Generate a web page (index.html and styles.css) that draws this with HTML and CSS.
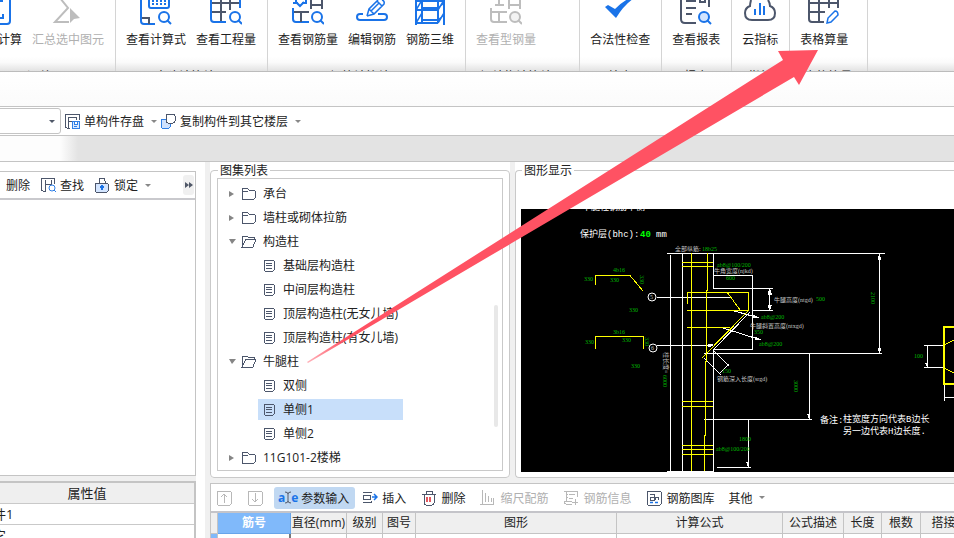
FILE: index.html
```html
<!DOCTYPE html>
<html lang="zh-CN">
<head>
<meta charset="utf-8">
<title>表格算量</title>
<link rel="stylesheet" href="styles.css">
</head>
<body>
<header class="ribbon">
  <section class="group group-first">
    <div class="tools">
      <button class="tool"><svg class="big" viewBox="0 0 32 26"><path class="b" d="M5 0V21q0 3 3 3H25q3 0 3-3V0"/><path class="b" d="M13 18H21V14M21 1H14"/></svg><span>汇总计算</span></button>
      <button class="tool muted"><svg class="big" viewBox="0 0 32 26"><path class="g" d="M8 -2L16 8L3 22H17"/><path class="gf" d="M18 8V23L22 19L28 18Z"/></svg><span>汇总选中图元</span></button>
    </div>
    <div class="caption">汇总</div>
  </section>
  <section class="group">
    <div class="tools">
      <button class="tool"><svg class="big" viewBox="0 0 32 26"><path class="b" d="M1 0V21q0 3 3 3H15M9 0V6q0 2 2 2H27q2 0 2-2V0"/><path class="d" d="M2 18H9V24"/><path class="b dots" d="M12 1H27M12 4H27"/><circle class="b" cx="24" cy="17" r="5"/><path class="b" d="M27 20l4 4"/></svg><span>查看计算式</span></button>
      <button class="tool"><svg class="big" viewBox="0 0 32 26"><path class="d" d="M2 3H29M2 12H16M11 0V22M20 0V10"/><path class="b" d="M1 0V19q0 3 3 3H16M30 0V8"/><circle class="b" cx="25" cy="17" r="5"/><path class="b" d="M28 20l4 4"/></svg><span>查看工程量</span></button>
    </div>
    <div class="caption">土建计算结果</div>
  </section>
  <section class="group">
    <div class="tools">
      <button class="tool"><svg class="big" viewBox="0 0 32 26"><path class="b" d="M1 3H6M10 3H14V0M4 0V2L8 6L12 2M1 8V19q0 3 3 3H17"/><path class="d" d="M2 12H17M9 12V22M19 0V9M30 0V9M19 5H30"/><circle class="b" cx="25" cy="17" r="5"/><path class="b" d="M28 20l4 4"/></svg><span>查看钢筋量</span></button>
      <button class="tool"><svg class="big" viewBox="0 0 32 26"><path class="b" d="M7 14H4q-3 0-3 3t3 3H28q3 0 3-3t-3-3H22"/><path class="b thin" d="M11 16L13 9L22 0M11 16L18 14L28 4Q29 1 26 0M13 9L18 14M21 1L26 6M15 11L23 3"/></svg><span>编辑钢筋</span></button>
      <button class="tool"><svg class="big" viewBox="0 0 32 26"><path class="b" d="M2 0V25M8 0V23M24 0V23M30 0V25M2 10H24M8 8H24M2 23H24M8 20H24M2 1H30"/><path class="b thin" d="M2 23L8 13M2 10L8 0M24 23L30 13M24 10L30 0M24 20L30 15M24 8L30 3"/></svg><span>钢筋三维</span></button>
    </div>
    <div class="caption">钢筋计算结果</div>
  </section>
  <section class="group">
    <div class="tools">
      <button class="tool muted"><svg class="big" viewBox="0 0 32 26"><path class="g" d="M5 5H14M9 0V5M1 8V19q0 3 3 3H17M2 12H17M9 12V22M19 0V9M30 0V9M19 5H30"/><circle class="g tint" cx="25" cy="17" r="5"/><path class="g" d="M28 20l4 4"/></svg><span>查看型钢量</span></button>
    </div>
    <div class="caption">钢结构计算结果</div>
  </section>
  <section class="group">
    <div class="tools">
      <button class="tool"><svg class="big" viewBox="0 0 32 26"><path fill="#1a73e8" d="M1 7L4 5L11 9Q18 2 24-1H29Q20 5 12 18Z"/></svg><span>合法性检查</span></button>
    </div>
    <div class="caption">检查</div>
  </section>
  <section class="group">
    <div class="tools">
      <button class="tool"><svg class="big" viewBox="0 0 32 26"><path class="d" d="M1 0V19q0 4 4 4H16M6 1H16M6 8H16M6 14H12M20 0V2H25V0M29 0V7"/><circle class="b blue-tint" cx="24" cy="17" r="5"/><path class="b" d="M27 20l4 4"/></svg><span>查看报表</span></button>
    </div>
    <div class="caption">报表</div>
  </section>
  <section class="group">
    <div class="tools">
      <button class="tool"><svg class="big" viewBox="0 0 32 26"><path class="d" d="M7 0Q6 4 6 6Q1 8 1 13Q1 20 8 20H24Q31 20 31 13Q31 8 26 6Q26 3 24 0"/><path class="b" d="M11 9V15M16 3V15M20 6V15"/></svg><span>云指标</span></button>
    </div>
    <div class="caption">指标</div>
  </section>
  <section class="group">
    <div class="tools">
      <button class="tool"><svg class="big" viewBox="0 0 32 26"><path class="d" d="M1 0V19q0 3 3 3H16M30 0V8M1 3H30M1 12H17M11 0V22M21 0V8"/><path class="b thin" fill="#fff" d="M19 23L20 18L27 11Q30 11 30 15L23 22Z"/></svg><span>表格算量</span></button>
    </div>
    <div class="caption">表格算量</div>
  </section>
</header>
<div class="titlebar"></div>
<nav class="toolbar">
  <div class="picker"><select aria-label="构件"><option></option></select></div>
  <button class="cmd"><svg class="small" viewBox="0 0 16 16"><path class="s" d="M6 15H3Q1 15 1 13V3Q1 1 3 1H15V7M4 15V4M4 4H12V7M4 8H8"/><path class="sb" fill="#dbeaff" d="M8 8H15V15H8ZM10 8V11H13V8M10 13H13"/></svg><span>单构件存盘</span><i class="caret"></i></button>
  <button class="cmd"><svg class="small" viewBox="0 0 16 16"><rect class="sb" fill="#cfe2ff" x="1" y="6" width="9" height="9" rx="1"/><rect class="s paper" x="6" y="1" width="9" height="9" rx="2"/></svg><span>复制构件到其它楼层</span><i class="caret"></i></button>
</nav>
<div class="band"></div>
<div class="workspace">
  <aside class="side">
    <section class="components">
      <div class="side-tools">
        <button class="cmd"><span>删除</span></button>
        <button class="cmd"><svg class="small" viewBox="0 0 16 16"><path class="s" d="M6 14H3Q1 14 1 12V3Q1 1 3 1H14V7M5 14V3M5 7H11V3"/><circle class="sb" cx="12" cy="11" r="3"/><path class="sb" d="M14 13l2 2"/></svg><span>查找</span></button>
        <button class="cmd"><svg class="small" viewBox="0 0 16 16"><path class="s" d="M5 6V4Q5 1 8 1T11 4V6"/><rect class="s blue-tint" x="1" y="6" width="13" height="9" rx="1"/><path d="M8 8V13M6 10H10" stroke="#1a73e8" stroke-width="2"/></svg><span>锁定</span><i class="caret"></i></button>
        <button class="more" aria-label="更多"><svg viewBox="0 0 8 6"><path d="M0 0L4 3L0 6ZM4 0L8 3L4 6Z" fill="#505868"/></svg></button>
      </div>
    </section>
    <table class="props">
      <thead><tr><th>属性值</th></tr></thead>
      <tbody><tr><td>构件1</td></tr><tr><td>其它</td></tr></tbody>
    </table>
  </aside>
  <main class="main">
    <div class="top">
      <fieldset class="box atlas">
        <legend>图集列表</legend>
        <ul class="tree">
          <li class="node"><i class="fold"></i><svg class="folder" viewBox="0 0 16 14"><path class="s" d="M1 12V2Q1 1 2 1H6L8 3H13Q14 3 14 4V11Q14 12 13 12H1M1 4H7"/></svg><span>承台</span></li>
          <li class="node"><i class="fold"></i><svg class="folder" viewBox="0 0 16 14"><path class="s" d="M1 12V2Q1 1 2 1H6L8 3H13Q14 3 14 4V11Q14 12 13 12H1M1 4H7"/></svg><span>墙柱或砌体拉筋</span></li>
          <li class="node"><i class="fold open"></i><svg class="folder" viewBox="0 0 16 14"><path class="s" d="M1 12V1H6L7 2H13V4M1 12L5 4H15L12 12Z"/></svg><span>构造柱</span></li>
          <li class="node leaf"><svg class="doc" viewBox="0 0 12 13"><path class="s" d="M2 1H10Q11 1 11 2V11Q11 12 10 12H2Q1 12 1 11V2Q1 1 2 1M3 4H9M3 6H9M3 9H9"/></svg><span>基础层构造柱</span></li>
          <li class="node leaf"><svg class="doc" viewBox="0 0 12 13"><path class="s" d="M2 1H10Q11 1 11 2V11Q11 12 10 12H2Q1 12 1 11V2Q1 1 2 1M3 4H9M3 6H9M3 9H9"/></svg><span>中间层构造柱</span></li>
          <li class="node leaf"><svg class="doc" viewBox="0 0 12 13"><path class="s" d="M2 1H10Q11 1 11 2V11Q11 12 10 12H2Q1 12 1 11V2Q1 1 2 1M3 4H9M3 6H9M3 9H9"/></svg><span>顶层构造柱(无女儿墙)</span></li>
          <li class="node leaf"><svg class="doc" viewBox="0 0 12 13"><path class="s" d="M2 1H10Q11 1 11 2V11Q11 12 10 12H2Q1 12 1 11V2Q1 1 2 1M3 4H9M3 6H9M3 9H9"/></svg><span>顶层构造柱(有女儿墙)</span></li>
          <li class="node"><i class="fold open"></i><svg class="folder" viewBox="0 0 16 14"><path class="s" d="M1 12V1H6L7 2H13V4M1 12L5 4H15L12 12Z"/></svg><span>牛腿柱</span></li>
          <li class="node leaf"><svg class="doc" viewBox="0 0 12 13"><path class="s" d="M2 1H10Q11 1 11 2V11Q11 12 10 12H2Q1 12 1 11V2Q1 1 2 1M3 4H9M3 6H9M3 9H9"/></svg><span>双侧</span></li>
          <li class="node leaf selected"><svg class="doc" viewBox="0 0 12 13"><path class="s" d="M2 1H10Q11 1 11 2V11Q11 12 10 12H2Q1 12 1 11V2Q1 1 2 1M3 4H9M3 6H9M3 9H9"/></svg><span>单侧1</span></li>
          <li class="node leaf"><svg class="doc" viewBox="0 0 12 13"><path class="s" d="M2 1H10Q11 1 11 2V11Q11 12 10 12H2Q1 12 1 11V2Q1 1 2 1M3 4H9M3 6H9M3 9H9"/></svg><span>单侧2</span></li>
          <li class="node"><i class="fold"></i><svg class="folder" viewBox="0 0 16 14"><path class="s" d="M1 12V2Q1 1 2 1H6L8 3H13Q14 3 14 4V11Q14 12 13 12H1M1 4H7"/></svg><span>11G101-2楼梯</span></li>
        </ul>
      </fieldset>
      <fieldset class="box figure">
        <legend>图形显示</legend>
        <svg class="cad" viewBox="521 209 433 263" preserveAspectRatio="xMinYMin slice">
          <rect x="521" y="209" width="2000" height="263" fill="#000"/>
          <g class="w">
            <path d="M667 253.500H885M670.500 255V471M682.500 253V471M713.500 253V288M713.500 349V471M667 471.500H714M713 275.500H753M752.500 276V349M713 288.500H773M769.500 289V310M752 310.500H773M657 297.500H730M657 345.500H713M713 349.500H753M704 353.500H882M879.500 254V353M809.500 353V419M704 419.500H812M748.500 420V467M717 467.500H751M750 312L713 350L729 366M704 358L721 375M720 373L729 364M731 310L759 318M723 328L761 340M924 345.500H944M924 367.500H944M927.500 346V367M944.500 385V401M944 397.500H954"/>
            <path d="M769.500 289l-1 5h3zM769.500 310l-1-5h3zM879.500 254l-1 5h2zM879.500 353l-1-5h2zM809.500 419l-2-5h2zM748.500 467l-2-5h2zM927.500 367l-2-4h2zM713 345l-5-1v3zM761 340l-6-3v2zM759 318l-6-3v2z" fill="#fff"/>
            <circle cx="652" cy="297" r="4"/><circle cx="653" cy="348" r="4"/>
          </g>
          <g class="y">
            <path d="M691.500 253V471M707.500 253V290L706.500 291V361L705.500 362V435L704.500 436V471M682 262.500H713M682 266.500H713M687.500 304V292.500H748.500V310.500H687M687 327.500H730M748 311L702 358M727 292L740 310M682 401.500H713M682 406.500H713M682 445.500H713M682 449.500H713M682 454.500H713M595.500 285V275.500H630L643 291M595.500 349V336.500H643.500V349M944 345L954 340M944 368L954 373"/>
            <path class="heavy" d="M955 327H944V384H955"/>
          </g>
          <g class="label title">
            <text x="582" y="210">牛腿柱钢筋单侧</text>
            <text x="580" y="237">保护层(bhc):</text><text x="656" y="237">mm</text>
            <text x="820" y="423">备注:</text><text x="843" y="422">柱宽度方向代表B边长</text><text x="843" y="434">另一边代表H边长度.</text>
          </g>
          <text class="cover" x="640" y="237">40</text>
          <g class="label tiny">
            <text x="675" y="251">全部纵筋:</text><text x="714" y="273">牛角宽度(njkd)</text><text x="774" y="302">牛腿高度(ntgd)</text><text x="750" y="328">牛腿斜置高度(ntxgd)</text><text x="717" y="381">钢筋深入长度(srgd)</text>
            <text x="650" y="299">5</text><text x="651" y="350">6</text><text transform="translate(664 352) rotate(90)">柱长度=</text>
          </g>
          <g class="value">
            <text x="702" y="251">18b25</text><text x="717" y="267">ab8@100/200</text><text x="726" y="280">600</text><text x="816" y="301">500</text>
            <text x="761" y="319">ab8@200</text><text x="754" y="334">350</text><text x="759" y="346">ab8@200</text><text x="722" y="373">150</text>
            <text x="613" y="272">4b16</text><text x="584" y="281">330</text><text x="610" y="282">330</text><text x="629" y="312">330</text><text x="613" y="334">3b16</text><text x="585" y="344">330</text><text x="622" y="342">330</text><text x="631" y="368">330</text>
            <text x="739" y="441">1800</text><text x="716" y="451">ab8@100/200</text><text x="914" y="358">100</text>
            <text transform="translate(640 275) rotate(90)">330</text><text transform="translate(645 337) rotate(90)">330</text><text transform="translate(663 375) rotate(90)">6000</text><text transform="translate(794 380) rotate(90)">3000</text><text transform="translate(871 292) rotate(90)">2100</text>
          </g>
        </svg>
      </fieldset>
    </div>
    <section class="rebar">
      <div class="rebar-tools">
        <button class="cmd" aria-label="上移"><svg class="small" viewBox="0 0 16 16"><path class="m" d="M2 1H14Q15 1 15 2V14Q15 15 14 15H2Q1 15 1 14V2Q1 1 2 1M8 13V4M5 7L8 4L11 7"/></svg></button>
        <button class="cmd" aria-label="下移"><svg class="small" viewBox="0 0 16 16"><path class="m" d="M2 1H14Q15 1 15 2V14Q15 15 14 15H2Q1 15 1 14V2Q1 1 2 1M8 3V12M5 9L8 12L11 9"/></svg></button>
        <button class="cmd active"><b class="ae">a<svg viewBox="0 0 6 13"><path d="M0 1Q3 1 3 3Q3 1 6 1M3 3V10M0 12Q3 12 3 10Q3 12 6 12" fill="none" stroke="#505868"/></svg>e</b><span>参数输入</span></button>
        <button class="cmd"><svg class="small" viewBox="0 0 16 16"><path class="s" d="M9 3V2H1M1 12H9V11M1 5H8V9H1Z"/><path d="M10 7H15M12 4L15 7L12 10" stroke="#1a73e8" stroke-width="1.500" fill="none"/></svg><span>插入</span></button>
        <button class="cmd"><svg class="small" viewBox="0 0 16 16"><path class="s" d="M1 4H15M5 4V1H11V4M3 4V13Q3 15 5 15H11Q13 15 13 13V4"/><path d="M6 7V12M9 7V12" stroke="#d9232e" stroke-width="1.500"/></svg><span>删除</span></button>
        <button class="cmd muted"><svg class="small" viewBox="0 0 16 16"><path class="m" d="M2 0V15M5 3V12M8 6V12M11 8V12M13 8V12M0 14H14M13 12V15"/></svg><span>缩尺配筋</span></button>
        <button class="cmd muted"><svg class="small" viewBox="0 0 16 16"><path class="m" d="M9 14H3Q1 14 1 12V11H9M3 11V1H14V7M1 1H13M6 4H12M6 8H10M12 9V15M9 12H15M4 4V5M4 7V8"/></svg><span>钢筋信息</span></button>
        <button class="cmd"><svg class="small" viewBox="0 0 16 16"><path class="s" d="M2 1H14Q15 1 15 2V14Q15 15 14 15H2Q1 15 1 14V2Q1 1 2 1M4 4H8V10H4V7H8M9 10V7H12V10"/><path d="M4 12.500H7M9 12.500H12" stroke="#1a73e8" stroke-width="1.500"/></svg><span>钢筋图库</span></button>
        <button class="cmd other"><span>其他</span><i class="caret"></i></button>
      </div>
      <table class="grid">
        <colgroup><col class="c-mark"><col class="c-no"><col class="c-dia"><col class="c-grade"><col class="c-fig"><col class="c-shape"><col class="c-formula"><col class="c-desc"><col class="c-len"><col class="c-count"><col class="c-lap"></colgroup>
        <thead><tr><th></th><th class="on">筋号</th><th>直径(mm)</th><th>级别</th><th>图号</th><th>图形</th><th>计算公式</th><th>公式描述</th><th>长度</th><th>根数</th><th>搭接</th></tr></thead>
        <tbody><tr><td class="mark"></td><td class="current"></td><td></td><td></td><td></td><td></td><td></td><td></td><td></td><td></td><td></td></tr></tbody>
      </table>
    </section>
  </main>
</div>
<svg class="pointer" viewBox="0 0 954 538" aria-hidden="true">
  <defs><linearGradient id="fade" gradientUnits="userSpaceOnUse" x1="305" y1="364" x2="345" y2="339"><stop offset="0" stop-color="#ff5263" stop-opacity="0.4"/><stop offset="1" stop-color="#ff5263"/></linearGradient></defs>
  <path fill="url(#fade)" d="M307 362L783 60L778 51L818 50L799 85L794 77L308 363Z"/>
</svg>
</body>
</html>
```
FILE: styles.css
```css
* { box-sizing: border-box; }
html, body { height: 100%; }
body {
  margin: 0;
  display: flex;
  flex-direction: column;
  position: relative;
  overflow: hidden;
  background: #fff;
  color: #222;
  font: 12px/20px "Open Sans", "Noto Sans CJK SC", sans-serif;
}
button {
  margin: 0;
  padding: 0;
  border: 0;
  background: none;
  color: inherit;
  font: inherit;
  white-space: nowrap;
}
svg { display: block; flex: none; }

.ribbon {
  display: flex;
  flex: none;
  height: 72px;
  overflow: hidden;
  border-bottom: 1px solid #bcbcbc;
  background: linear-gradient(#fff 80%, #fafafa 88%, #e2e2e2);
}
.group { flex: none; border-right: 1px solid #d4d4d4; }
.group-first { margin-left: -36px; }
.tools { display: flex; gap: 10px; padding: 0 11px 0 10px; height: 67px; }
.tool { display: flex; flex-direction: column; align-items: center; justify-content: flex-start; gap: 4px; }
.caption { padding: 0 15px 0 14px; text-align: center; }
.big { width: 32px; height: 26px; }
.b, .d, .g { fill: none; stroke-width: 2; }
.b { stroke: #1a73e8; }
.d { stroke: #4c566b; }
.g { stroke: #bdbdbd; }
.gf { fill: #bdbdbd; }
.thin { stroke-width: 1.5; }
.dots { stroke-dasharray: 2 2; }
.tint { fill: #f3f3f3; }
.muted { color: #b0b0b0; }

.titlebar {
  flex: none;
  height: 35px;
  border-bottom: 1px solid #c4c4c4;
  background: linear-gradient(#fff, #fbfbfb);
}
.toolbar {
  display: flex;
  align-items: center;
  flex: none;
  height: 29px;
  border-bottom: 1px solid #c4c4c4;
}
.picker { position: relative; margin-left: -20px; }
.picker select {
  display: block;
  width: 81px;
  height: 26px;
  appearance: none;
  border: 1px solid #c4c4c4;
  border-radius: 3px;
  background: #fff;
}
.picker::after {
  content: "";
  position: absolute;
  right: 6px;
  top: 12px;
  border: 3px solid transparent;
  border-top-color: #505868;
  border-bottom: 0;
}
.cmd { display: flex; align-items: center; gap: 4px; }
.cmd span { padding-top: 2px; }
.small { width: 16px; height: 16px; }
.s, .sb, .m { stroke-width: 1; }
.s { fill: none; stroke: #4c566b; }
.sb { stroke: #2f7fe6; }
circle.sb, .paper { fill: #fff; }
.m { fill: none; stroke: #b8b8b8; }
path.s, path.m, path.sb, rect.s, rect.sb { shape-rendering: crispEdges; }
.blue-tint { fill: #d3e5ff; }
.caret {
  margin-left: 3px;
  border: 3px solid transparent;
  border-top-color: #888;
  border-bottom: 0;
}
.toolbar .cmd { margin-left: 3px; }

.band {
  flex: none;
  height: 26px;
  border-bottom: 1px solid #c4c4c4;
  background: linear-gradient(90deg, #fdfdfd 60px, #e3e3e3 78px);
}
.workspace { display: flex; flex: 1; min-height: 0; }
.side {
  display: flex;
  flex-direction: column;
  flex: none;
  width: 196px;
  margin-right: 9px;
  padding-top: 9px;
  background: linear-gradient(#fff 60px, #f0f0f0 60px);
}
.components {
  flex: none;
  height: 305px;
  border: solid #c4c4c4;
  border-width: 1px 1px 1px 0;
  background: #fff;
}
.side-tools {
  display: flex;
  align-items: center;
  gap: 10px;
  height: 28px;
  padding-left: 6px;
  border-bottom: 2px solid #c9c9cd;
}
.more {
  display: flex;
  align-items: center;
  justify-content: center;
  width: 11px;
  height: 20px;
  margin-left: auto;
  margin-right: 1px;
  border-radius: 3px;
  background: #f0f0f0;
}
.more svg { width: 8px; height: 6px; }
.props {
  width: 216px;
  margin: 5px 0 0 -20px;
  border-collapse: separate;
  border-spacing: 0;
  border-top: 2px solid #c4c4c4;
  border-right: 2px solid #c4c4c4;
  font-size: 13px;
}
.props th, .props td { height: 21px; padding: 0; border-bottom: 1px solid #c9c9c9; background: #fff; }
.props th { background: #efefef; font-weight: 400; }

.main {
  display: flex;
  flex: 1;
  flex-direction: column;
  min-width: 0;
  padding-left: 5px;
  background: linear-gradient(90deg, #f0f0f0 5px, #fff 5px);
}
.top {
  display: flex;
  flex: none;
  gap: 5px;
  height: 321px;
  padding-bottom: 5px;
  background:
    linear-gradient(90deg, transparent 300px, #f0f0f0 300px 305px, transparent 305px),
    linear-gradient(#fff 15px, #f0f0f0 15px);
}
.box {
  min-width: 0;
  margin: 0;
  padding: 0 6px;
  border: 1px solid #c9c9c9;
  border-radius: 4px;
  background: #fff;
}
.box legend { height: 16px; margin-left: 1px; padding: 0 2px; line-height: 18px; }
.atlas { flex: none; width: 300px; }
.figure { flex: 1; padding: 0 0 0 5px; border-right: 0; border-radius: 4px 0 0 4px; }
.tree {
  position: relative;
  display: flex;
  flex-direction: column;
  height: 293px;
  margin: 0;
  padding: 3px 0 0;
  border: 1px solid #c9c9c9;
  list-style: none;
}
.tree::after {
  content: "";
  position: absolute;
  right: 4px;
  top: 126px;
  width: 4px;
  height: 122px;
  border-radius: 2px;
  background: #e8e8e8;
}
.node { display: flex; align-items: center; flex: none; height: 24px; padding-left: 11px; }
.fold { width: 12px; height: 6px; background: #858585; clip-path: polygon(0 0, 5px 3px, 0 6px); }
.fold.open { clip-path: polygon(0 0, 7px 0, 3px 5px); }
.folder { width: 16px; height: 14px; margin-right: 6px; }
.leaf { height: 21px; margin: 1px 99px 2px 40px; padding-left: 5px; }
.doc { width: 12px; height: 13px; margin-right: 8px; }
.selected { background: #c8dffa; }
.cad { width: 100%; height: 263px; margin-top: 31px; }
.w, .y { fill: none; stroke-width: 1; shape-rendering: crispEdges; }
.w { stroke: #fff; }
.w circle { shape-rendering: auto; }
.y { stroke: #ff0; }
.heavy { stroke-width: 2; }
.label, .value { font-family: "Liberation Serif", "Noto Sans CJK SC", serif; }
.label { fill: #fff; }
.title { font-family: "Liberation Mono", "Noto Sans CJK SC", monospace; font-size: 9px; }
.tiny { fill: #c4c4c4; font-size: 6px; }
.value { fill: #00b800; font-size: 6px; }
.cover { fill: #0f0; font: bold 9px "Liberation Mono", monospace; }

.rebar { flex: 1; min-height: 0; overflow: hidden; border: solid #c4c4c4; border-width: 1px 0 0 1px; }
.rebar-tools { display: flex; align-items: center; gap: 15px; height: 27px; padding-left: 5px; }
.active { height: 22px; margin: 0 -8px 0 -4px; padding: 0 6px 0 4px; gap: 3px; border-radius: 3px; background: #c0d8f2; }
.ae { display: flex; align-items: center; color: #1a73e8; }
.ae svg { width: 6px; height: 13px; }
.other { margin-left: -1px; }
.grid {
  table-layout: fixed;
  width: 756px;
  border-collapse: separate;
  border-spacing: 0;
  border-top: 2px solid #c4c4c9;
}
.grid th, .grid td { height: 20px; padding: 0; border: solid #c4c4c4; border-width: 0 1px 1px 0; white-space: nowrap; }
.grid th { background: #efefef; font-weight: 400; }
.grid .on { background: #80b9fa; border-color: #68a5ea; color: #fff; font-weight: 700; }
.grid .mark { background: #80b9fa; }
.grid .current { border-right: 2px solid #777; }
.c-mark { width: 7px; }
.c-no { width: 73px; }
.c-dia { width: 56px; }
.c-grade { width: 36px; }
.c-fig { width: 33px; }
.c-shape { width: 201px; }
.c-formula { width: 166px; }
.c-desc { width: 61px; }
.c-len { width: 38px; }
.c-count { width: 39px; }
.c-lap { width: 46px; }

.pointer { position: absolute; left: 0; top: 0; width: 954px; height: 538px; pointer-events: none; }
```
